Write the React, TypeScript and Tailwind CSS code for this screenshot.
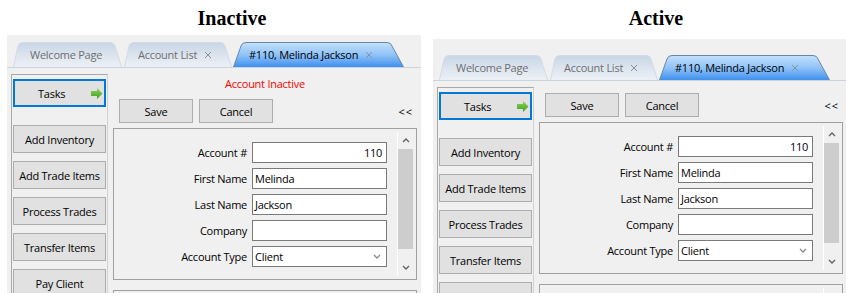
import React from "react";

const sideButtons = ["Add Inventory", "Add Trade Items", "Process Trades", "Transfer Items", "Pay Client"];

const fields = [
    { label: "Account #", value: "110", align: "right" },
    { label: "First Name", value: "Melinda" },
    { label: "Last Name", value: "Jackson" },
    { label: "Company", value: "" },
    { label: "Account Type", value: "Client", select: true },
];

const Close: React.FC<{ light?: boolean }> = ({ light }) => (
    <svg width="8" height="8" viewBox="0 0 8 8" className="ml-[7px] shrink-0">
        <path d="M1 1L7 7M7 1L1 7" stroke={light ? "#7f93ad" : "#8e8e8e"} strokeWidth="1" />
    </svg>
);

const Tab: React.FC<{ w: number; active?: boolean; children: React.ReactNode; pad: string }> = ({ w, active, children, pad }) => {
    const h = 25;
    const l = active ? 8 : 5;
    const r = active ? 12 : 7;
    const d = `M0.5 ${h} L${l} 4 Q${l + 1} 0.5 ${l + 5} 0.5 L${w - r - 5} 0.5 Q${w - r - 1} 0.5 ${w - r} 4 L${w - 0.5} ${h}`;
    const id = active ? "tabOn" : "tabOff";
    return (
        <div className={`relative h-[25px] shrink-0 flex items-center ${pad} ${active ? "text-black" : "text-[#6e6e6e]"}`} style={{ width: w }}>
            <svg className="absolute inset-0" width={w} height={h} viewBox={`0 0 ${w} ${h}`}>
                <defs>
                    <linearGradient id={id} x1="0" y1="0" x2="0" y2="1">
                        {active ? (
                            <>
                                <stop offset="0" stopColor="#c4e0fd" />
                                <stop offset="0.5" stopColor="#91c3f7" />
                                <stop offset="1" stopColor="#3f90f0" />
                            </>
                        ) : (
                            <>
                                <stop offset="0" stopColor="#c9d6e6" />
                                <stop offset="1" stopColor="#edf1f6" />
                            </>
                        )}
                    </linearGradient>
                </defs>
                <path d={d + " Z"} fill={`url(#${id})`} />
                <path d={d} fill="none" stroke={active ? "#6a86a6" : "#d2dbe5"} strokeWidth="1" />
            </svg>
            <span className="relative flex items-center whitespace-nowrap">{children}</span>
        </div>
    );
};

const Chevron: React.FC<{ up?: boolean; color?: string }> = ({ up, color = "#606060" }) => (
    <svg width="8" height="5" viewBox="0 0 8 5">
        <polyline points={up ? "1,4 4,1 7,4" : "1,1 4,4 7,1"} fill="none" stroke={color} strokeWidth="1.3" />
    </svg>
);

const Scrollbar: React.FC = () => (
    <div className="ml-auto mr-[3px] my-[3px] w-[16px] border-l border-white flex flex-col">
        <div className="h-[17px] flex items-center justify-center">
            <Chevron up />
        </div>
        <div className="h-[100px] bg-[#cdcdcd]" />
        <div className="flex-1" />
        <div className="h-[17px] flex items-center justify-center">
            <Chevron />
        </div>
    </div>
);

const AccountWindow: React.FC<{ inactive?: boolean }> = ({ inactive }) => (
    <div className={`flex-1 bg-[#f0f0f0] flex flex-col min-h-0 ${inactive ? "pt-[7px]" : "pt-[16px]"}`}>
        <div className="flex items-end h-[26px] shrink-0 pl-[6px] border-b border-[#c9d4e0]">
            <Tab w={109} pad="pl-[17px]">Welcome Page</Tab>
            <div className="w-[2px]" />
            <Tab w={108} pad="pl-[14px]">
                Account List
                <Close />
            </Tab>
            <div className="w-[1px]" />
            <Tab w={171} active pad="pl-[16px]">
                #110, Melinda Jackson
                <Close light />
            </Tab>
        </div>

        <div className="flex flex-1 min-h-0 pl-[4px] pt-[6px] overflow-hidden">
            <div className="w-[97px] shrink-0 border border-b-0 border-[#a9a9a9] border-r-[#d2d2d2] px-[1px] pt-[4px] flex flex-col overflow-hidden">
                <div className="h-[28px] shrink-0 border-2 border-[#0078d7] bg-[#e1e1e1] flex items-center pl-[23px] pr-[1px]">
                    <span>Tasks</span>
                    <svg width="12" height="11" viewBox="0 0 12 11" className="ml-auto">
                        <defs>
                            <linearGradient id="grn" x1="0" y1="0" x2="0" y2="1">
                                <stop offset="0" stopColor="#8fd65a" />
                                <stop offset="1" stopColor="#3e9e1c" />
                            </linearGradient>
                        </defs>
                        <path d="M0 3H6V0L11.5 5.5L6 11V8H0Z" fill="url(#grn)" />
                    </svg>
                </div>
                <div className="mt-[18px] shrink-0 flex flex-col gap-[8px]">
                    {sideButtons.map((b) => (
                        <div key={b} className="h-[28px] shrink-0 border border-[#adadad] bg-[#e1e1e1] flex items-center justify-center whitespace-nowrap">
                            {b}
                        </div>
                    ))}
                </div>
            </div>

            <div className="ml-[5px] w-[304px] shrink-0 flex flex-col">
                {inactive && <div className="h-[19px] shrink-0 flex items-center justify-center text-[#ff0000]">Account Inactive</div>}
                <div className="mt-[6px] h-[24px] shrink-0 flex items-center pl-[6px] pr-[4px]">
                    <div className="w-[74px] h-[24px] border border-[#adadad] bg-[#e1e1e1] flex items-center justify-center">Save</div>
                    <div className="ml-[6px] w-[74px] h-[24px] border border-[#adadad] bg-[#e1e1e1] flex items-center justify-center">Cancel</div>
                    <span className="ml-auto tracking-[1px]">&lt;&lt;</span>
                </div>

                <div className="mt-[5px] h-[152px] shrink-0 border border-[#a0a0a0] flex">
                    <div className="pt-[13px] grid grid-cols-[133px_135px] gap-x-[5px] gap-y-[5px] auto-rows-[21px] content-start">
                        {fields.map((f) => (
                            <React.Fragment key={f.label}>
                                <div className="flex items-center justify-end whitespace-nowrap">{f.label}</div>
                                <div
                                    className={`border border-[#7a7a7a] bg-white flex items-center pl-[2px] pr-[4px] ${
                                        f.align === "right" ? "justify-end" : "justify-start"
                                    }`}
                                >
                                    <span>{f.value}</span>
                                    {f.select && (
                                        <span className="ml-auto mr-[1px]">
                                            <Chevron color="#8a8a8a" />
                                        </span>
                                    )}
                                </div>
                            </React.Fragment>
                        ))}
                    </div>
                    <Scrollbar />
                </div>

                <div className="mt-[10px] flex-1 border border-b-0 border-[#a0a0a0] flex">
                    <div className="ml-auto mr-[3px] mt-[3px] w-[16px] border-l border-white" />
                </div>
            </div>
        </div>
    </div>
);

export default function App() {
    return (
        <div className="flex w-[846px] h-[293px] overflow-hidden bg-white text-[11px] leading-none tracking-[-0.25px] text-black font-['Open_Sans',sans-serif]">
            <div className="ml-[7px] w-[414px] shrink-0 flex flex-col">
                <div className="h-[35px] shrink-0 pt-[8px] pl-[36px] text-center font-['Liberation_Serif',serif] font-bold text-[20px] leading-[20px] tracking-normal">
                    Inactive
                </div>
                <AccountWindow inactive />
            </div>
            <div className="ml-[12px] w-[414px] shrink-0 flex flex-col">
                <div className="h-[39px] shrink-0 pt-[8px] pl-[32px] text-center font-['Liberation_Serif',serif] font-bold text-[20px] leading-[20px] tracking-normal">
                    Active
                </div>
                <AccountWindow />
            </div>
        </div>
    );
}
